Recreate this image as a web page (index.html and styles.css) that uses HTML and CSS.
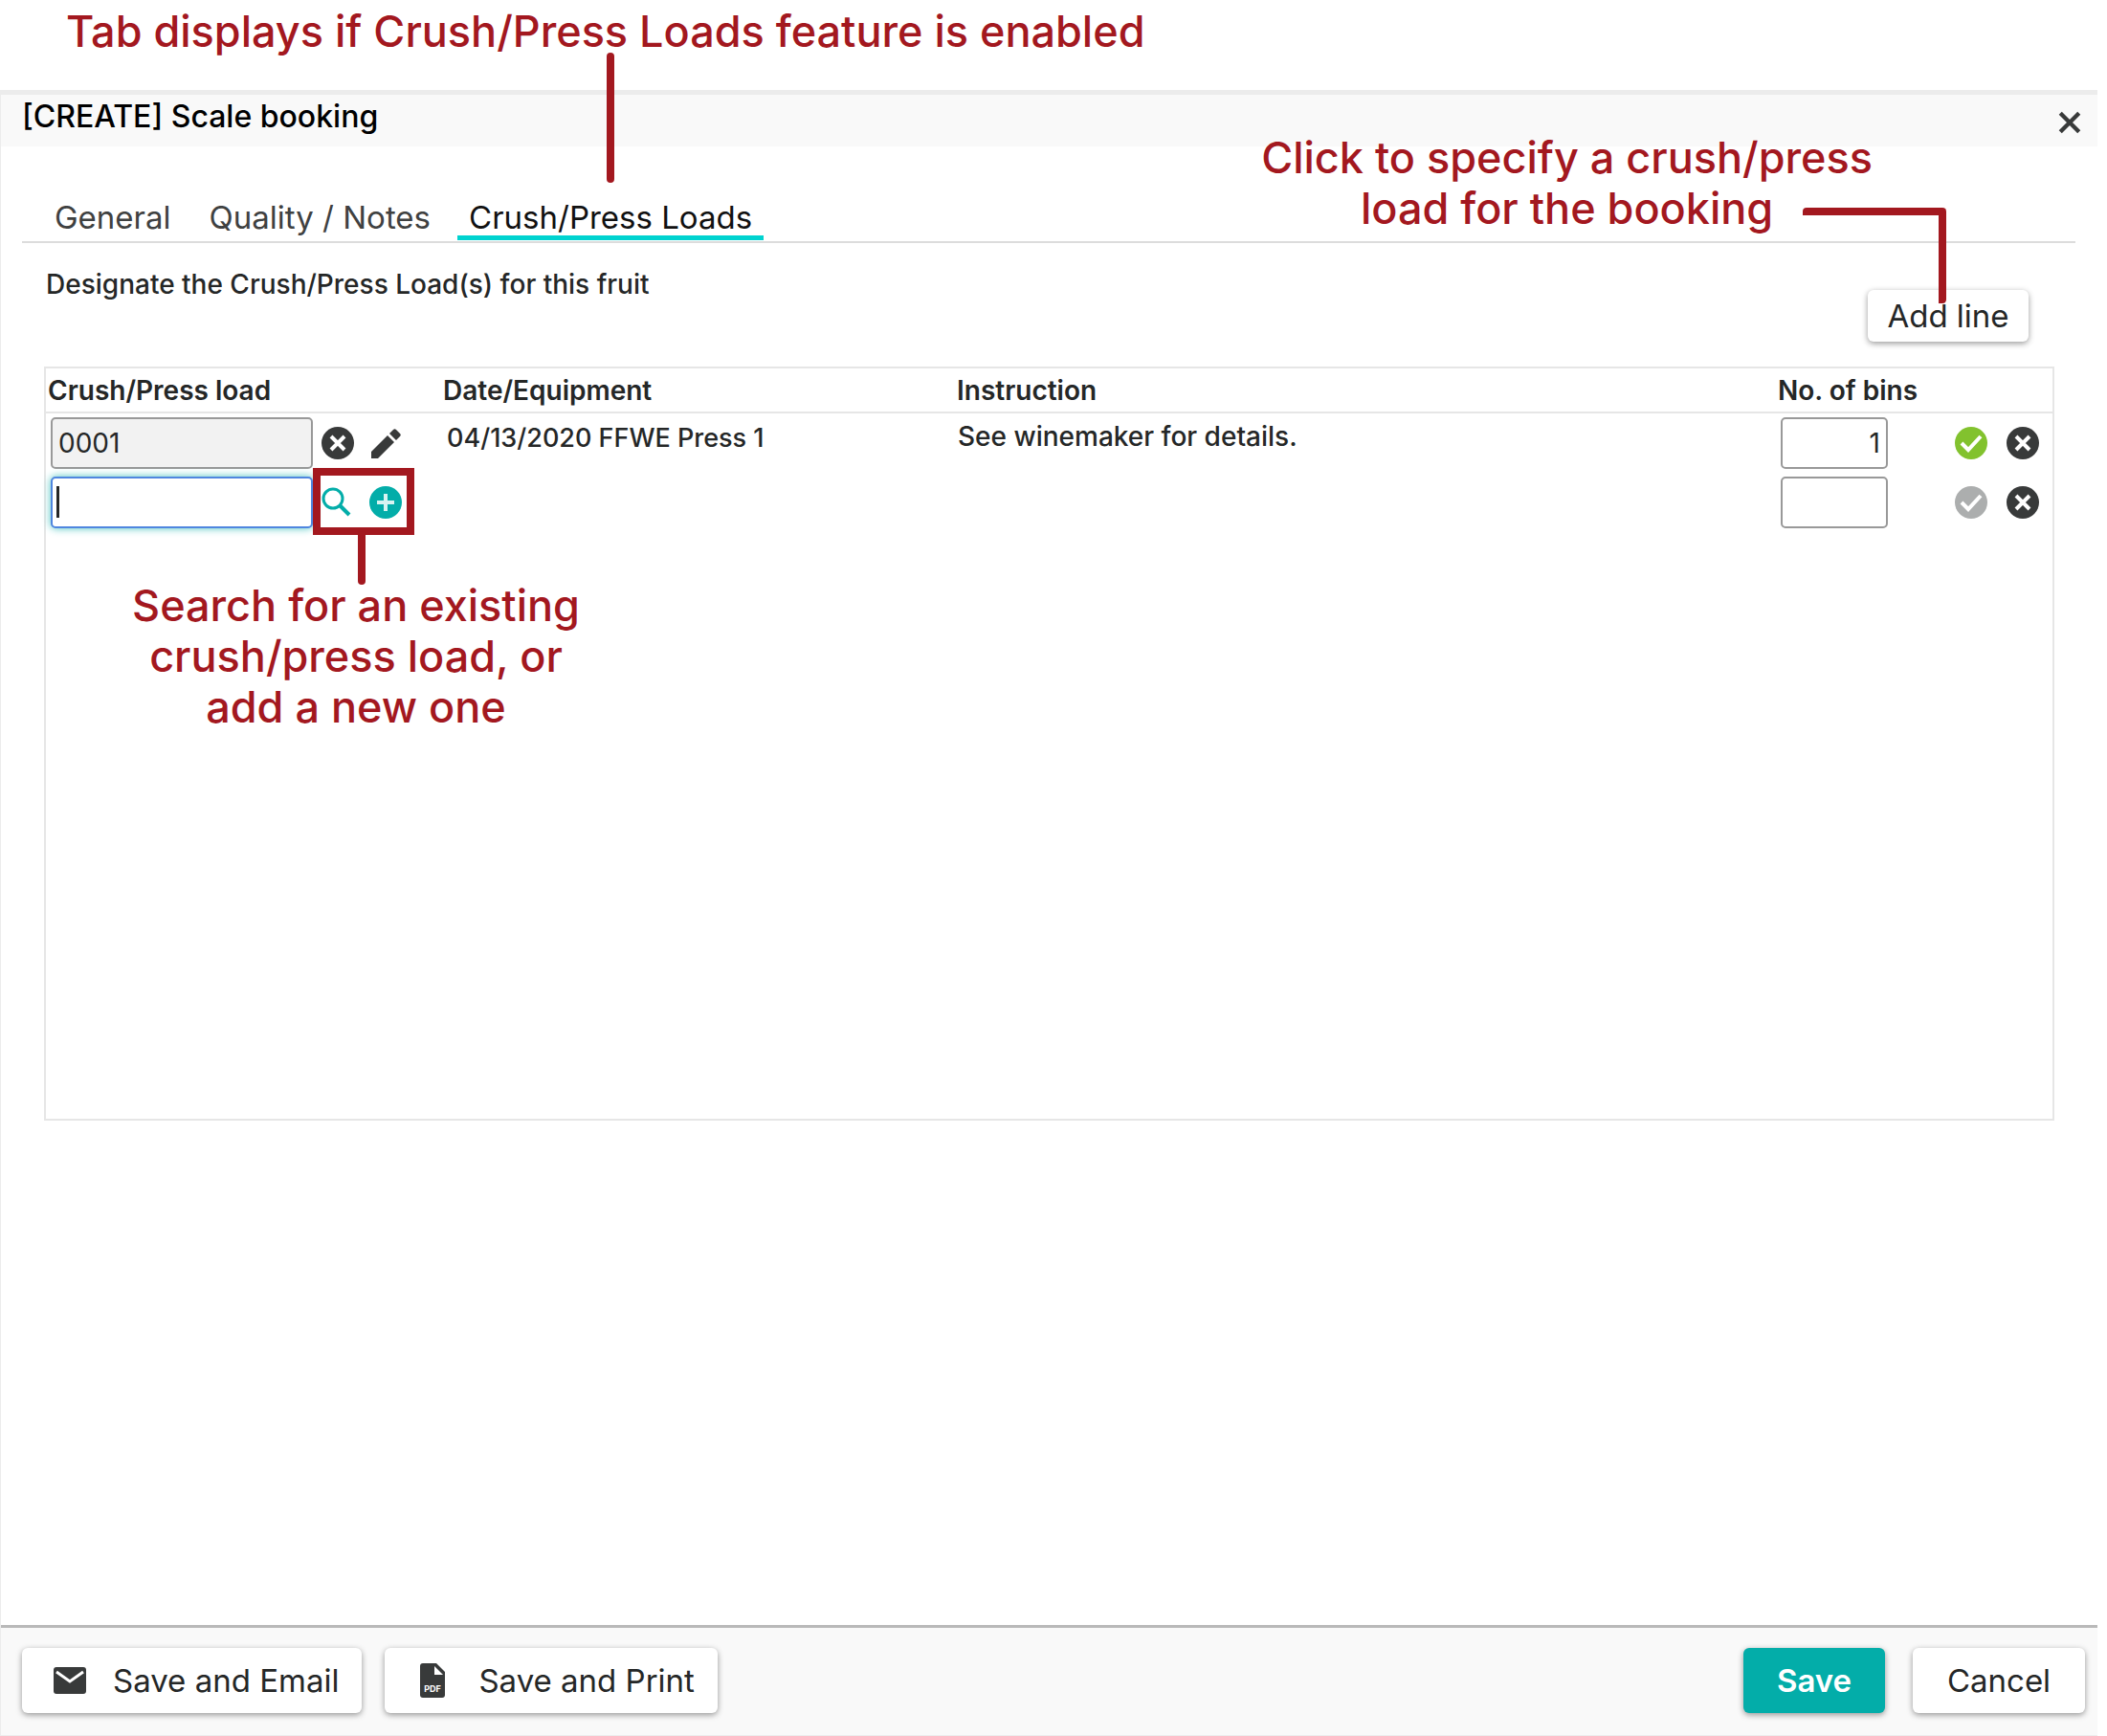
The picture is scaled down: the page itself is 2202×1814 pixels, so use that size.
FILE: index.html
```html
<!DOCTYPE html>
<html lang="en">
<head>
<meta charset="utf-8">
<title>Scale booking</title>
<link rel="stylesheet" href="styles.css">
</head>
<body>
<svg class="sprite" aria-hidden="true">
  <symbol id="i-remove" viewBox="0 0 36 36"><circle cx="18" cy="18" r="17"/><path d="M11 11l14 14M25 11L11 25" fill="none" stroke="#fff" stroke-width="4"/></symbol>
  <symbol id="i-check" viewBox="0 0 36 36"><circle cx="18" cy="18" r="17"/><path d="M8 18l7 7L28 11" fill="none" stroke="#fff" stroke-width="4"/></symbol>
  <symbol id="i-add" viewBox="0 0 36 36"><circle cx="18" cy="18" r="17"/><path d="M18 9v18M9 18h18" fill="none" stroke="#d9f3f1" stroke-width="4"/></symbol>
  <symbol id="i-edit" viewBox="0 0 36 36"><path d="M3 27v7h7l17-17-7-7zM22 8l7 7 4-4c1-1 1-2 0-3l-4-4c-1-1-2-1-3 0z"/></symbol>
  <symbol id="i-search" viewBox="0 0 36 36"><circle cx="13" cy="14" r="10" fill="none" stroke="currentColor" stroke-width="3"/><path d="M20 21l10 10" fill="none" stroke="currentColor" stroke-width="4"/></symbol>
</svg>

<p class="note note-tab">Tab displays if Crush/Press Loads feature is enabled<span class="stem stem-tab"></span></p>

<main class="dialog">
  <header class="dialog-head">
    <h1>[CREATE] Scale booking</h1>
    <button class="icon-btn close" type="button" aria-label="Close">
      <svg viewBox="0 0 24 24"><path d="M3 3l18 18M21 3L3 21" fill="none" stroke="currentColor" stroke-width="4"/></svg>
    </button>
  </header>

  <div class="dialog-body">
    <nav class="tabs">
      <button type="button" class="tab">General</button>
      <button type="button" class="tab">Quality / Notes</button>
      <button type="button" class="tab active">Crush/Press Loads</button>
    </nav>

    <div class="toolbar">
      <p class="hint">Designate the Crush/Press Load(s) for this fruit</p>
      <div class="add-wrap">
        <button type="button" class="btn add-line">Add line</button>
        <p class="note note-add">Click to specify a crush/press<br>load for the booking</p>
        <span class="elbow"></span>
      </div>
    </div>

    <div class="grid-box">
      <table class="loads">
        <colgroup><col class="c-load"><col class="c-date"><col><col class="c-bins"><col class="c-act"></colgroup>
        <thead>
          <tr><th>Crush/Press load</th><th>Date/Equipment</th><th>Instruction</th><th>No. of bins</th><th aria-label="Actions"></th></tr>
        </thead>
        <tbody>
          <tr>
            <td><div class="line">
              <input class="field load" type="text" value="0001" readonly aria-label="Crush/Press load, line 1">
              <span class="tools">
                <button class="icon-btn" type="button" aria-label="Clear"><svg><use href="#i-remove"/></svg></button>
                <button class="icon-btn" type="button" aria-label="Edit"><svg><use href="#i-edit"/></svg></button>
              </span>
            </div></td>
            <td class="text date">04/13/2020 FFWE Press 1</td>
            <td class="text">See winemaker for details.</td>
            <td><div class="line"><input class="field bins" type="text" value="1" aria-label="Number of bins, line 1"></div></td>
            <td><div class="line actions">
              <button class="icon-btn ok" type="button" aria-label="Confirm"><svg><use href="#i-check"/></svg></button>
              <button class="icon-btn" type="button" aria-label="Remove"><svg><use href="#i-remove"/></svg></button>
            </div></td>
          </tr>
          <tr>
            <td><div class="line">
              <span class="caret-wrap"><input class="field load current" type="text" aria-label="Crush/Press load, line 2"><span class="caret"></span></span>
              <span class="tools teal">
                <button class="icon-btn" type="button" aria-label="Search"><svg><use href="#i-search"/></svg></button>
                <button class="icon-btn" type="button" aria-label="Add"><svg><use href="#i-add"/></svg></button>
                <span class="frame"></span>
                <span class="stem stem-search"></span>
                <span class="note note-search">Search for an existing<br>crush/press load, or<br>add a new one</span>
              </span>
            </div></td>
            <td></td>
            <td></td>
            <td><div class="line"><input class="field bins" type="text" aria-label="Number of bins, line 2"></div></td>
            <td><div class="line actions">
              <button class="icon-btn off" type="button" aria-label="Confirm"><svg><use href="#i-check"/></svg></button>
              <button class="icon-btn" type="button" aria-label="Remove"><svg><use href="#i-remove"/></svg></button>
            </div></td>
          </tr>
        </tbody>
      </table>
    </div>
  </div>

  <footer class="dialog-foot">
    <button type="button" class="btn with-icon">
      <svg class="mail" viewBox="0 0 36 30"><rect x="1" y="1" width="34" height="28" rx="3"/><path d="M4 6l14 10L32 6" fill="none" stroke="#fff" stroke-width="3"/></svg>
      Save and Email
    </button>
    <button type="button" class="btn with-icon">
      <svg class="pdf" viewBox="0 0 28 36"><path d="M4 0h14l9 9v24c0 2-1 3-3 3H4c-2 0-3-1-3-3V3c0-2 1-3 3-3z"/><path d="M16 3v9h9z" fill="#fff"/><text x="14" y="30" text-anchor="middle">PDF</text></svg>
      Save and Print
    </button>
    <span class="grow"></span>
    <button type="button" class="btn primary">Save</button>
    <button type="button" class="btn cancel">Cancel</button>
  </footer>
</main>
</body>
</html>
```
FILE: styles.css
```css
* { box-sizing: border-box; }

body {
  margin: 0;
  min-height: 100vh;
  display: flex;
  flex-direction: column;
  overflow-x: hidden;
  background: #fff;
  color: #252727;
  font-family: Inter, "Open Sans", sans-serif;
  font-size: 28px;
}

h1, p { margin: 0; }

button, input { font: inherit; color: inherit; }

.sprite { position: absolute; width: 0; height: 0; }

/* Red annotations */
.note {
  color: #a3181f;
  font-size: 45px;
  font-weight: 500;
  line-height: 53px;
  white-space: nowrap;
}

.note-tab {
  position: relative;
  height: 94px;
  padding: 6px 0 0 69px;
}

.stem {
  position: absolute;
  z-index: 2;
  width: 8px;
  border-radius: 4px;
  background: #a3181f;
}

.stem-tab { left: 634px; top: 55px; height: 136px; }

/* Dialog */
.dialog {
  flex: 1;
  display: flex;
  flex-direction: column;
  margin-right: 10px;
  border: 1px solid #ececec;
  border-top-width: 5px;
  border-right: 0;
}

.dialog-head {
  display: flex;
  justify-content: space-between;
  height: 54px;
  padding: 0 16px 0 22px;
  background: #f9f9f9;
}

h1 {
  color: #000;
  font-size: 32px;
  font-weight: 500;
  line-height: 46px;
}

.icon-btn {
  display: flex;
  padding: 0;
  border: 0;
  background: none;
  color: #383a3a;
  fill: currentColor;
}

.icon-btn svg { width: 36px; height: 36px; }

.close { align-self: center; padding-top: 4px; }
.close svg { width: 26px; height: 26px; }

.dialog-body {
  flex: 1;
  padding: 56px 23px 0 22px;
}

.tabs {
  display: flex;
  gap: 16px;
  padding: 0 22px 1px;
  border-bottom: 2px solid #dcdcdc;
}

.tab {
  padding: 0 12px 1px;
  border: 0;
  border-bottom: 5px solid transparent;
  background: none;
  color: #3f4141;
  font-size: 33px;
  line-height: 36px;
}

.tab.active { border-color: #00d3d0; color: #111; }

.toolbar {
  display: flex;
  justify-content: space-between;
  align-items: flex-start;
  padding: 25px 49px 26px 25px;
}

.hint {
  font-weight: 500;
  line-height: 36px;
}

.add-wrap { position: relative; padding-top: 24px; }

.note-add {
  position: absolute;
  right: 163px;
  top: -141px;
  text-align: center;
}

.elbow {
  position: absolute;
  right: 86px;
  top: -62px;
  width: 150px;
  height: 100px;
  border: 8px solid #a3181f;
  border-left: 0;
  border-bottom: 0;
  border-radius: 4px;
}

.btn {
  border: 0;
  border-radius: 6px;
  background: #fff;
  box-shadow: 0 2px 6px rgba(0, 0, 0, .4);
  font-size: 33px;
  line-height: 36px;
}

.add-line { display: block; width: 168px; height: 54px; padding: 0; }

/* Load lines */
.grid-box {
  min-height: 788px;
  margin: 0 22px 0 23px;
  border: 2px solid #e6e6e6;
}

.loads {
  width: 100%;
  table-layout: fixed;
  border-collapse: separate;
  border-spacing: 0;
}

.c-load { width: 413px; }
.c-date { width: 537px; }
.c-bins { width: 176px; }
.c-act { width: 113px; }

th {
  height: 47px;
  padding: 0 2px;
  border-bottom: 2px solid #e6e6e6;
  font-size: 28px;
  font-weight: 600;
  line-height: 36px;
  text-align: left;
}

td { height: 62px; padding: 4px 5px; vertical-align: top; }

.text { padding: 6px 3px; font-weight: 500; line-height: 36px; }
.date { padding: 8px 6px; font-size: 27px; }

.line { display: flex; align-items: center; }

.field {
  display: block;
  height: 54px;
  padding: 0 6px;
  border: 2px solid #999;
  border-radius: 5px;
  background: #fff;
}

.load { width: 274px; }
.load[readonly] { background: #f2f2f2; }
.current { border-color: #4f86df; box-shadow: 0 0 9px #4cc4c0; }
.bins { width: 112px; text-align: right; }

.caret-wrap { position: relative; }
.caret { position: absolute; left: 6px; top: 10px; width: 3px; height: 33px; background: #252727; }

.tools {
  position: relative;
  display: flex;
  gap: 14px;
  padding-left: 8px;
}

.teal .icon-btn { color: #03ada9; }

.frame {
  position: absolute;
  left: 0;
  top: -18px;
  width: 106px;
  height: 70px;
  border: 8px solid #a3181f;
}

.stem-search { left: 47px; top: 48px; height: 56px; }

.note-search {
  position: absolute;
  left: -190px;
  top: 99px;
  width: 470px;
  text-align: center;
}

.actions { height: 54px; gap: 18px; padding-left: 5px; }
.ok { color: #82c22e; }
.off { color: #acaeae; }

/* Footer */
.dialog-foot {
  display: flex;
  padding: 21px 13px 23px 22px;
  border-top: 3px solid #b9b9b9;
  background: #f9f9f9;
}

.dialog-foot .btn { height: 68px; }

.with-icon {
  display: flex;
  align-items: center;
  margin-right: 24px;
  padding: 0 24px 0 32px;
}

.with-icon svg { fill: #383a3a; }
.mail { width: 36px; height: 30px; margin-right: 27px; }
.pdf { width: 28px; height: 36px; margin: 0 34px 0 4px; }
.pdf text { fill: #fff; font-size: 9px; font-weight: 700; }

.grow { flex: 1; }

.dialog-foot .primary {
  width: 148px;
  margin-right: 29px;
  background: #03ada9;
  color: #fff;
  font-weight: 600;
}

.cancel { width: 180px; }
```
